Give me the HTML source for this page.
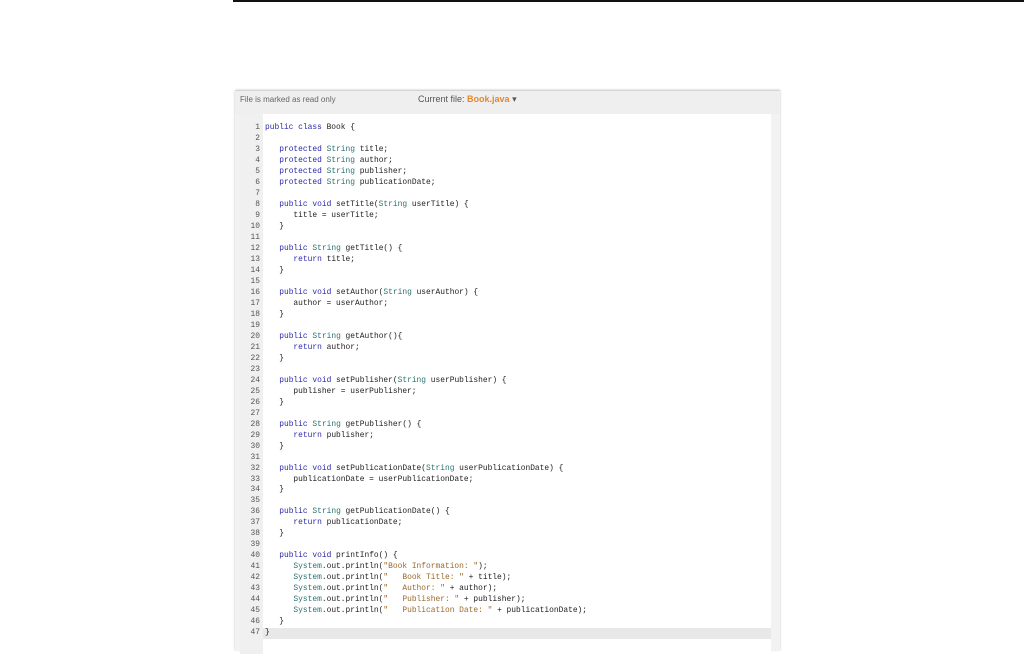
<!DOCTYPE html>
<html><head><meta charset="utf-8"><style>
body{margin:0;width:1024px;height:640px;background:#fff;position:relative;overflow:hidden;font-family:"Liberation Sans",sans-serif}
#top{position:absolute;left:233px;top:0;width:791px;height:2px;background:#111}
#panel{position:absolute;left:235px;top:91px;width:545px;height:560px;background:#f2f2f2;box-shadow:0 -1px 2px rgba(0,0,0,.25)}
#hdr{position:absolute;left:0;top:0;width:545px;height:23px;background:#efefef;font-size:8px;color:#666}
#ro{position:absolute;left:5px;top:4px}
#cf{position:absolute;left:183px;top:3px;font-size:9px;color:#555}
#cf b{color:#e8872a;font-weight:bold}
#code{position:absolute;left:5px;top:23px;width:531px;height:540px;background:#fff}
#gut{position:absolute;left:0;top:0;width:23px;height:540px;background:#f0f0f0}
pre{margin:0;position:absolute;top:9px;left:0;font-family:"Liberation Mono",monospace;font-size:7.9px;line-height:10.98px;color:#222}
#nums{left:0;width:20px;text-align:right;color:#555}
#src{left:25px}
.k{color:#2a2aa8}.t{color:#2b7272}.s{color:#9a6a2a}
#cur{position:absolute;left:0;top:514px;width:531px;height:11px;background:#e8e8e8}
</style></head><body>
<div id="top"></div>
<div id="panel">
<div id="hdr"><span id="ro">File is marked as read only</span><span id="cf">Current file: <b>Book.java</b> ▾</span></div>
<div id="code"><div id="cur"></div><div id="gut"></div>
<pre id="nums">1
2
3
4
5
6
7
8
9
10
11
12
13
14
15
16
17
18
19
20
21
22
23
24
25
26
27
28
29
30
31
32
33
34
35
36
37
38
39
40
41
42
43
44
45
46
47</pre>
<pre id="src"><span class="k">public class</span> Book {

   <span class="k">protected</span> <span class="t">String</span> title;
   <span class="k">protected</span> <span class="t">String</span> author;
   <span class="k">protected</span> <span class="t">String</span> publisher;
   <span class="k">protected</span> <span class="t">String</span> publicationDate;

   <span class="k">public void</span> setTitle(<span class="t">String</span> userTitle) {
      title = userTitle;
   }

   <span class="k">public</span> <span class="t">String</span> getTitle() {
      <span class="k">return</span> title;
   }

   <span class="k">public void</span> setAuthor(<span class="t">String</span> userAuthor) {
      author = userAuthor;
   }

   <span class="k">public</span> <span class="t">String</span> getAuthor(){
      <span class="k">return</span> author;
   }

   <span class="k">public void</span> setPublisher(<span class="t">String</span> userPublisher) {
      publisher = userPublisher;
   }

   <span class="k">public</span> <span class="t">String</span> getPublisher() {
      <span class="k">return</span> publisher;
   }

   <span class="k">public void</span> setPublicationDate(<span class="t">String</span> userPublicationDate) {
      publicationDate = userPublicationDate;
   }

   <span class="k">public</span> <span class="t">String</span> getPublicationDate() {
      <span class="k">return</span> publicationDate;
   }

   <span class="k">public void</span> printInfo() {
      <span class="t">System</span>.out.println(<span class="s">"Book Information: "</span>);
      <span class="t">System</span>.out.println(<span class="s">"   Book Title: "</span> + title);
      <span class="t">System</span>.out.println(<span class="s">"   Author: "</span> + author);
      <span class="t">System</span>.out.println(<span class="s">"   Publisher: "</span> + publisher);
      <span class="t">System</span>.out.println(<span class="s">"   Publication Date: "</span> + publicationDate);
   }
}</pre>
</div></div>
</body></html>
